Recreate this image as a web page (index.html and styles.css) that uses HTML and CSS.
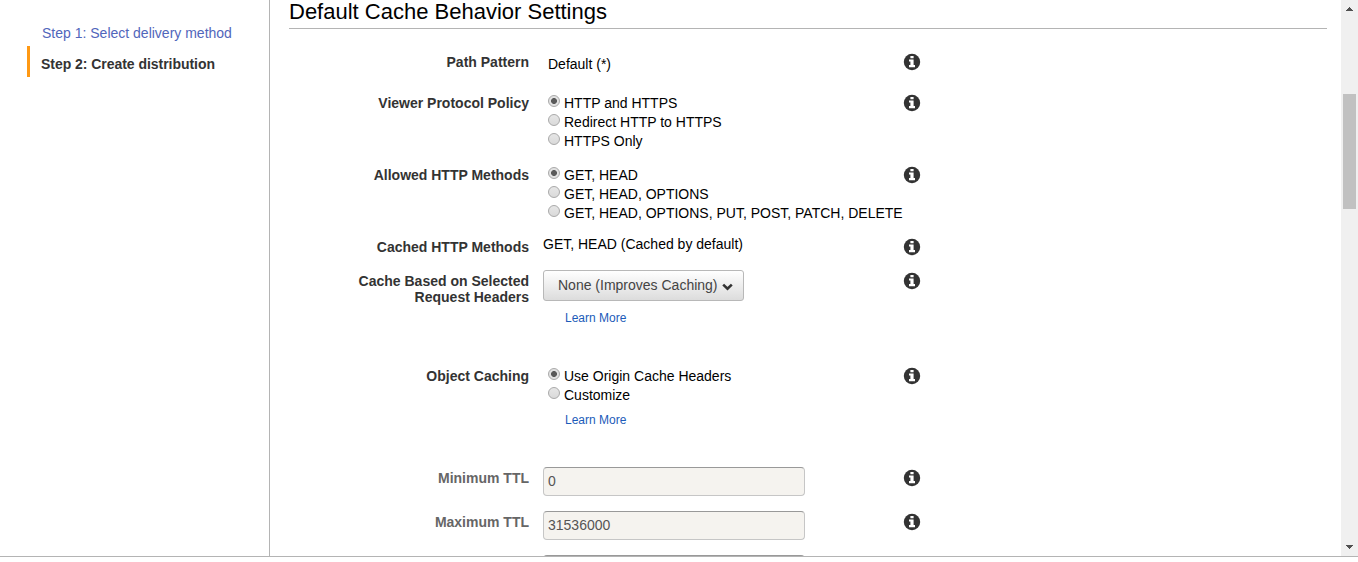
FILE: index.html
```html
<!DOCTYPE html>
<html lang="en">
<head>
<meta charset="utf-8">
<title>Create distribution</title>
<link rel="stylesheet" href="styles.css">
</head>
<body>
<svg class="defs" width="0" height="0" aria-hidden="true">
  <symbol id="info" viewBox="0 0 18 18">
    <circle cx="9" cy="9" r="8.2" fill="#333"/>
    <path d="M7.4 2.9h3.2v2.4H7.4zM6 6.5h4.6V12H12v2.2H6V12h1.4V8.6H6z" fill="#fff"/>
  </symbol>
</svg>
<div class="app">
  <nav class="steps">
    <a class="step">Step 1: Select delivery method</a>
    <a class="step current">Step 2: Create distribution</a>
  </nav>
  <main class="content">
    <h2 class="heading">Default Cache Behavior Settings</h2>
    <div class="form">
      <div class="row path">
        <div class="label">Path Pattern</div>
        <div class="control"><span class="text">Default (*)</span></div>
        <svg class="info"><use href="#info"/></svg>
      </div>
      <div class="row choices">
        <div class="label">Viewer Protocol Policy</div>
        <div class="control">
          <div class="option"><i class="radio on"></i><span>HTTP and HTTPS</span></div>
          <div class="option"><i class="radio"></i><span>Redirect HTTP to HTTPS</span></div>
          <div class="option"><i class="radio"></i><span>HTTPS Only</span></div>
        </div>
        <svg class="info"><use href="#info"/></svg>
      </div>
      <div class="row choices">
        <div class="label">Allowed HTTP Methods</div>
        <div class="control">
          <div class="option"><i class="radio on"></i><span>GET, HEAD</span></div>
          <div class="option"><i class="radio"></i><span>GET, HEAD, OPTIONS</span></div>
          <div class="option"><i class="radio"></i><span>GET, HEAD, OPTIONS, PUT, POST, PATCH, DELETE</span></div>
        </div>
        <svg class="info"><use href="#info"/></svg>
      </div>
      <div class="row cached">
        <div class="label">Cached HTTP Methods</div>
        <div class="control"><span class="text">GET, HEAD (Cached by default)</span></div>
        <svg class="info"><use href="#info"/></svg>
      </div>
      <div class="row headers">
        <div class="label">Cache Based on Selected<br>Request Headers</div>
        <div class="control">
          <div class="select"><span>None (Improves Caching)</span>
            <svg class="chevron" viewBox="0 0 11 8"><path d="M1.2 1.6 5.5 5.7 9.8 1.6" fill="none" stroke="#333" stroke-width="2.6"/></svg>
          </div>
          <a class="more">Learn More</a>
        </div>
        <svg class="info"><use href="#info"/></svg>
      </div>
      <div class="row caching">
        <div class="label">Object Caching</div>
        <div class="control">
          <div class="option"><i class="radio on"></i><span>Use Origin Cache Headers</span></div>
          <div class="option"><i class="radio"></i><span>Customize</span></div>
          <a class="more">Learn More</a>
        </div>
        <svg class="info"><use href="#info"/></svg>
      </div>
      <div class="row ttl">
        <div class="label">Minimum TTL</div>
        <div class="control"><div class="field">0</div></div>
        <svg class="info"><use href="#info"/></svg>
      </div>
      <div class="row ttl">
        <div class="label">Maximum TTL</div>
        <div class="control"><div class="field">31536000</div></div>
        <svg class="info"><use href="#info"/></svg>
      </div>
      <div class="row ttl">
        <div class="label"></div>
        <div class="control"><div class="field"></div></div>
      </div>
    </div>
  </main>
  <div class="scrollbar">
    <svg class="arrow" viewBox="0 0 7 4" shape-rendering="crispEdges"><path d="M3 0h1v1h1v1h1v1h1v1H0V3h1V2h1V1h1z" fill="#505050"/></svg>
    <div class="thumb"></div>
    <svg class="arrow down" viewBox="0 0 7 4" shape-rendering="crispEdges"><path d="M0 0h7v1H6v1H5v1H4v1H3V3H2V2H1V1H0z" fill="#505050"/></svg>
  </div>
</div>
</body>
</html>
```
FILE: styles.css
```css
* { box-sizing: border-box; }
body {
  margin: 0;
  background: #fff;
  color: #000;
  font: 14px/19px "Liberation Sans", Arial, sans-serif;
  overflow: hidden;
}
.defs { display: block; }
.app {
  display: flex;
  height: 557px;
  border-bottom: 1px solid #b4b4b4;
  overflow: hidden;
}
.steps {
  width: 270px;
  flex: none;
  padding: 20px 0 0 27px;
  border-right: 1px solid #b4b4b4;
}
.step {
  display: block;
  height: 26px;
  line-height: 26px;
  padding-left: 15px;
  color: #5166bb;
  white-space: nowrap;
}
.step.current {
  height: 31px;
  line-height: 36px;
  padding-left: 11px;
  border-left: 3px solid #ff9914;
  color: #333;
  font-weight: bold;
  letter-spacing: -0.04px;
}
.content {
  flex: 1;
  padding: 0 14px 0 19px;
}
.heading {
  margin: 0 0 25px;
  height: 29px;
  border-bottom: 1px solid #b4b4b4;
  font-size: 22px;
  font-weight: normal;
  line-height: 24px;
}
.row {
  display: grid;
  grid-template-columns: 240px 361px 18px;
  column-gap: 14px;
  align-items: start;
}
.label {
  color: #333;
  font-weight: bold;
  line-height: 16px;
  text-align: right;
}
.info {
  display: block;
  width: 18px;
  height: 18px;
  margin: -1px 0 0 -15px;
}
.text { display: block; }
.path { height: 41px; }
.path .text { padding-left: 5px; margin-top: 1px; }
.choices { height: 72px; }
.choices .control, .caching .control { margin-top: -1px; }
.option {
  display: flex;
  height: 19px;
  padding-left: 5px;
  gap: 4px;
  white-space: nowrap;
}
.radio {
  width: 12px;
  height: 12px;
  margin-top: 1px;
  flex: none;
  border: 1px solid #a9a9a9;
  border-radius: 50%;
  background: linear-gradient(#e6e6e6, #dadada);
}
.radio.on {
  background: radial-gradient(circle at center, #5a5a5a 2.6px, #e2e2e2 3.3px);
}
.cached { height: 34px; }
.cached .text { margin-top: -4px; }
.headers { height: 95px; }
.headers .control { margin-top: -3px; }
.select {
  display: flex;
  width: 201px;
  height: 31px;
  padding: 0 10px 0 14px;
  justify-content: space-between;
  border: 1px solid #b8b8b8;
  border-radius: 3px;
  background: linear-gradient(#fff, #dcdcdc);
  color: #444;
  line-height: 29px;
  white-space: nowrap;
}
.chevron { width: 11px; height: 8px; margin-top: 12px; }
.more {
  display: block;
  padding-left: 22px;
  margin-top: 8px;
  color: #1c5bb9;
  font-size: 12px;
  line-height: 18px;
}
.caching { height: 102px; }
.caching .more { margin-top: 6px; }
.ttl { height: 44px; }
.ttl .label { color: #666; }
.ttl .control { margin-top: -3px; }
.field {
  width: 262px;
  height: 29px;
  padding-left: 4px;
  border: 1px solid #c6c6c6;
  border-top-color: #999;
  border-radius: 4px;
  background: #f5f3ef;
  color: #555;
  line-height: 27px;
}
.scrollbar {
  display: flex;
  flex: none;
  flex-direction: column;
  align-items: center;
  width: 17px;
  padding: 7px 0;
  background: #f0f0f0;
}
.arrow { width: 7px; height: 4px; }
.thumb {
  width: 13px;
  height: 115px;
  margin-top: 83px;
  background: #c1c1c1;
}
.down { margin-top: auto; }
```
